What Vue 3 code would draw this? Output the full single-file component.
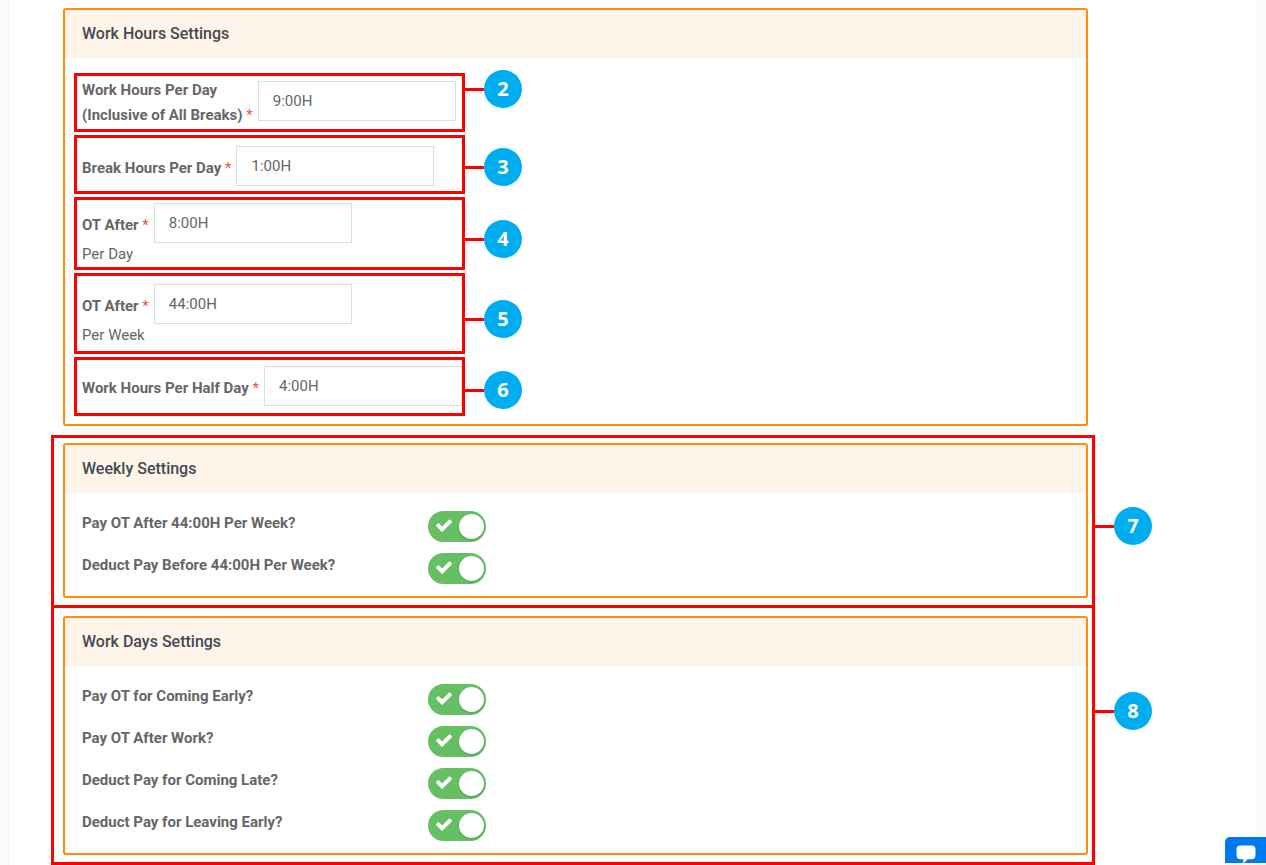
<script setup>
import { reactive } from 'vue'

const hours = reactive([
  { id: 'work-hours', label: ['Work Hours Per Day', '(Inclusive of All Breaks)'], value: '9:00H', step: 2, at: 16, layout: 'double' },
  { id: 'break-hours', label: ['Break Hours Per Day'], value: '1:00H', step: 3, at: 32, layout: 'single low' },
  { id: 'ot-day', label: ['OT After'], value: '8:00H', note: 'Per Day', step: 4, at: 42, layout: 'day' },
  { id: 'ot-week', label: ['OT After'], value: '44:00H', note: 'Per Week', step: 5, at: 46, layout: 'week' },
  { id: 'half-day', label: ['Work Hours Per Half Day'], value: '4:00H', step: 6, at: 33, layout: 'single' }
])

const groups = reactive([
  {
    id: 'weekly',
    title: 'Weekly Settings',
    step: 7,
    at: 91,
    options: [
      { label: 'Pay OT After 44:00H Per Week?', on: true },
      { label: 'Deduct Pay Before 44:00H Per Week?', on: true }
    ]
  },
  {
    id: 'days',
    title: 'Work Days Settings',
    step: 8,
    at: 106,
    options: [
      { label: 'Pay OT for Coming Early?', on: true },
      { label: 'Pay OT After Work?', on: true },
      { label: 'Deduct Pay for Coming Late?', on: true },
      { label: 'Deduct Pay for Leaving Early?', on: true }
    ]
  }
])
</script>

<template>
  <main class="page">
    <div class="stack">
      <section class="panel first">
        <h2 class="panel-title">Work Hours Settings</h2>
        <div class="hours">
          <div v-for="h in hours" :key="h.id" class="frame">
            <div class="field" :class="h.layout">
              <div class="line">
                <label :for="h.id">
                  <template v-for="(part, i) in h.label" :key="part"><br v-if="i">{{ part }}</template>
                  <span class="star">&nbsp;*</span>
                </label>
                <input :id="h.id" v-model="h.value" type="text">
              </div>
              <p v-if="h.note" class="note">{{ h.note }}</p>
            </div>
            <span class="callout" :style="{ top: h.at - 3 + 'px' }"><b>{{ h.step }}</b></span>
          </div>
        </div>
      </section>

      <div v-for="g in groups" :key="g.id" class="group" :class="g.id">
        <section class="panel">
          <h2 class="panel-title">{{ g.title }}</h2>
          <div class="options">
            <div v-for="(o, i) in g.options" :key="i" class="option">
              <label :for="g.id + i">{{ o.label }}</label>
              <span class="toggle">
                <input :id="g.id + i" v-model="o.on" type="checkbox">
                <svg v-if="o.on" viewBox="121 290 1550 1250" aria-hidden="true">
                  <path d="M1671 566q0 40-28 68l-724 724-136 136q-28 28-68 28t-68-28l-136-136-362-362q-28-28-28-68t28-68l136-136q28-28 68-28t68 28l294 295 656-657q28-28 68-28t68 28l136 136q28 28 28 68z" />
                </svg>
              </span>
            </div>
          </div>
        </section>
        <span class="callout" :style="{ top: g.at - 3 + 'px' }"><b>{{ g.step }}</b></span>
      </div>
    </div>
    <button class="chat" type="button" aria-label="Chat">
      <svg viewBox="0 0 20 18" aria-hidden="true">
        <path d="M4.500 0.500H15.500Q19.500 0.500 19.500 4.500V10Q19.500 14.200 15.500 14.300H11.500Q9.700 17.200 6.700 18Q7.600 16.300 7.200 14.300H4.500Q0.500 14.200 0.500 10V4.500Q0.500 0.500 4.500 0.500Z" />
      </svg>
    </button>
  </main>
</template>

<style>
body {
  margin: 0;
  background: #f9fafc;
}
</style>

<style scoped>
* {
  box-sizing: border-box;
}
.page {
  min-height: 100vh;
  margin: 0 9px;
  padding: 8px 162px 0 42px;
  background: #fff;
  box-shadow: 0 0 0 1px #f3f4f6;
  font-family: Roboto, "Liberation Sans", sans-serif;
  font-size: 15px;
  color: #666;
}
.panel {
  border: 2px solid #ff8c0a;
  border-radius: 3px;
  background: #fff;
}
.first {
  margin: 0 7px 9px 12px;
}
.panel-title {
  margin: 0;
  padding: 0 17px;
  background: #fef4e9;
  font-size: 16px;
  font-weight: 500;
  line-height: 48px;
  color: #444951;
}
.hours {
  display: flex;
  flex-direction: column;
  gap: 3px;
  padding: 15px 9px 8px;
}
.frame {
  position: relative;
  width: 391px;
  max-width: 100%;
  border: 3px solid #f00;
}
.field {
  overflow: hidden;
  padding-left: 5px;
}
.line {
  display: flex;
  gap: 5px;
}
.line label,
.option label {
  font-weight: 700;
  color: #666;
  white-space: nowrap;
}
.line label {
  line-height: 25px;
}
.line input {
  flex: none;
  width: 198px;
  height: 40px;
  padding: 0 14px;
  border: 1px solid #ddd;
  background: #fff;
  font: inherit;
  color: #666;
}
.star {
  font-weight: 400;
  color: #f0503c;
}
.double .line {
  padding: 5px 0 6px;
}
.double label {
  margin: -3px 0 -5px;
}
.single .line {
  padding: 6px 0 7px;
}
.low .line {
  padding: 8px 0 5px;
}
.single label,
.day label,
.week label {
  padding-top: 10px;
}
.day .line {
  padding-top: 3px;
}
.week .line {
  padding-top: 8px;
}
.day {
  padding-bottom: 1px;
}
.week {
  padding-bottom: 4px;
}
.note {
  margin: 0;
  line-height: 23px;
}
.callout {
  position: absolute;
  left: calc(100% + 3px);
  display: flex;
  align-items: center;
  width: 57px;
  height: 0;
}
.callout::before {
  content: "";
  flex: 1;
  height: 3px;
  background: #f00;
}
.callout b {
  width: 38px;
  height: 38px;
  border-radius: 50%;
  background: #00aeef;
  font: 700 20px/38px "Open Sans", "Noto Sans", sans-serif;
  color: #fff;
  text-align: center;
}
.group {
  position: relative;
  border: 3px solid #f00;
  padding: 5px 4px 7px 9px;
}
.group + .group {
  margin-top: -3px;
  padding-top: 8px;
}
.options {
  display: flex;
  flex-direction: column;
  gap: 11px;
  padding: 18px 17px 12px;
}
.option {
  display: flex;
}
.option label {
  width: 346px;
  line-height: 25px;
}
.toggle {
  position: relative;
  width: 58px;
  height: 31px;
}
.toggle input {
  appearance: none;
  display: flex;
  align-items: center;
  width: 100%;
  height: 100%;
  margin: 0;
  padding: 0 2px;
  border-radius: 16px;
  background: #ccc;
}
.toggle input:checked {
  justify-content: flex-end;
  background: #66bf62;
}
.toggle input::before {
  content: "";
  width: 25px;
  height: 25px;
  border-radius: 50%;
  background: #fff;
  box-shadow: 0 1px 2px rgba(0, 0, 0, 0.2);
}
.toggle svg {
  position: absolute;
  top: 8px;
  left: 8px;
  width: 16px;
  height: 13px;
  fill: #fff;
  pointer-events: none;
}
.chat {
  position: fixed;
  right: 0;
  bottom: 2px;
  width: 41px;
  height: 26px;
  padding: 8px 0 0 11px;
  border: 0;
  border-radius: 5px 0 0 0;
  background: #0078ee;
}
.chat svg {
  display: block;
  width: 20px;
  height: 18px;
  fill: #fff;
}
</style>
